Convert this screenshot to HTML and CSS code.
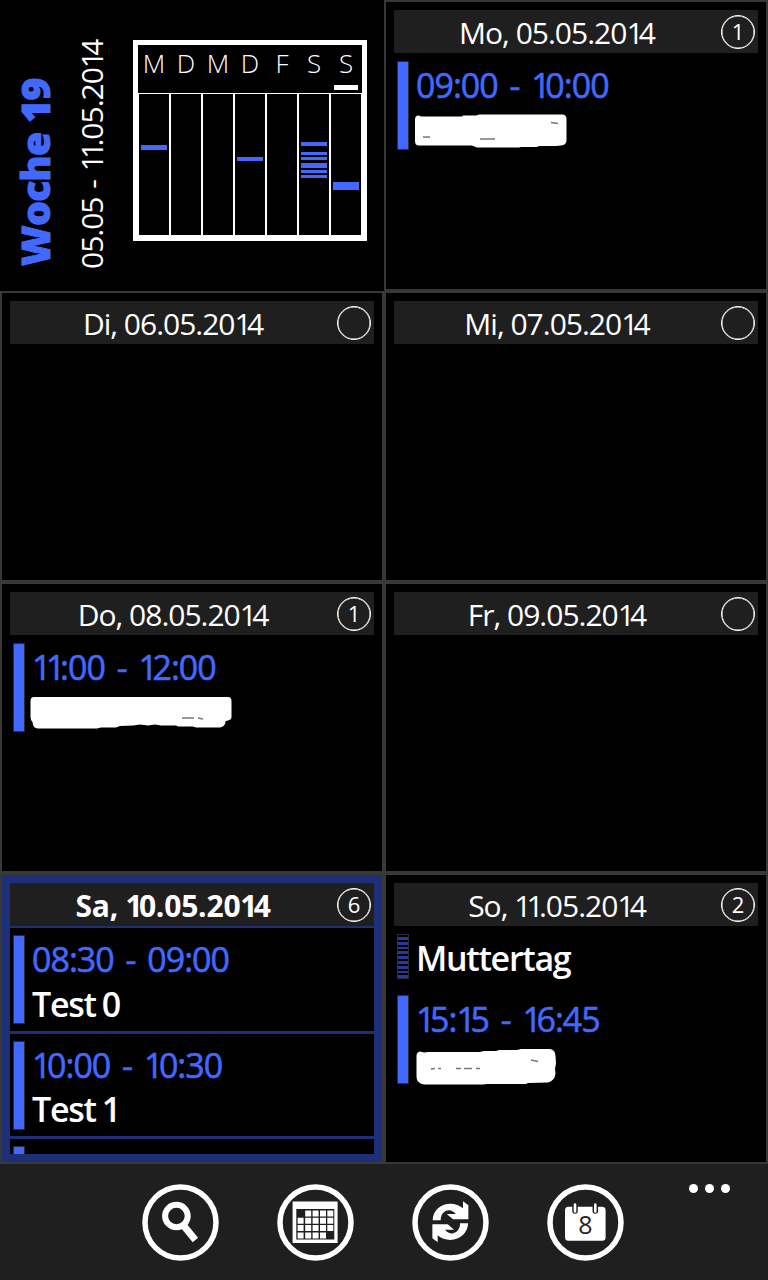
FILE: index.html
```
<!doctype html>
<html lang="de">
    <head>
        <meta charset="utf-8">
        <title>Woche 19</title>
        <meta name="viewport" content="width=device-width, initial-scale=1"/>
        <link rel="stylesheet" href="styles.css">
    </head>
    <body>
        <div class="week" role="main">
            <div class="overview">
                <h1 class="overview-title">Woche 19</h1>
                <p class="overview-range">05.05 - <span class="one">11</span>.05.20<span class="one">1</span>4</p>
                <div class="mini">
                    <div class="mini-head">
                        <span>M</span><span>D</span><span>M</span><span>D</span><span>F</span><span>S</span><span class="today">S</span>
                    </div>
                    <div class="mini-body">
                        <div class="mini-day"><i style="margin-top:51px;height:5px"></i></div>
                        <div class="mini-day"></div>
                        <div class="mini-day"></div>
                        <div class="mini-day"><i style="margin-top:63px;height:4px"></i></div>
                        <div class="mini-day"></div>
                        <div class="mini-day">
                            <i style="margin-top:48px;height:4px"></i>
                            <i style="margin-top:6px;height:3px"></i>
                            <i style="margin-top:2px;height:3px"></i>
                            <i style="margin-top:3px;height:5px"></i>
                            <i style="margin-top:1.5px;height:3.5px"></i>
                            <i style="margin-top:1.5px;height:3.5px"></i>
                        </div>
                        <div class="mini-day"><i style="margin-top:88px;height:8px"></i></div>
                    </div>
                </div>
            </div>

            <div class="day">
                <div class="day-head"><h2 class="date">Mo, 05.05.20<span class="one">1</span>4</h2><span class="count">1</span></div>
                <div class="events">
                    <div class="event">
                        <div class="bar"></div>
                        <div class="event-text">
                            <p class="time">09:00 - <span class="one">1</span>0:00</p>
                            <svg class="scribble" width="210" height="44" viewBox="0 0 210 44">
                                <path fill="#fff" d="M1 14Q1 9 5 9.500L7 10.500L48 10.500L49 9.500L62 9.500L65 8.500H148Q152.500 8.500 152.500 13V34Q152.500 39 147 39.500L142 40L125 40L123 41H107L105 41.500H63L58 39.500H5Q1 39.500 1 35Z"/>
                                <path stroke="#777" stroke-width="1.500" d="M9 31h7M66 33h15M137 16.500l7 1"/>
                            </svg>
                        </div>
                    </div>
                </div>
            </div>

            <div class="day">
                <div class="day-head"><h2 class="date">Di, 06.05.20<span class="one">1</span>4</h2><span class="count"></span></div>
            </div>

            <div class="day">
                <div class="day-head"><h2 class="date">Mi, 07.05.20<span class="one">1</span>4</h2><span class="count"></span></div>
            </div>

            <div class="day">
                <div class="day-head"><h2 class="date">Do, 08.05.20<span class="one">1</span>4</h2><span class="count">1</span></div>
                <div class="events">
                    <div class="event">
                        <div class="bar"></div>
                        <div class="event-text">
                            <p class="time"><span class="one">11</span>:00 - <span class="one">1</span>2:00</p>
                            <svg class="scribble" width="210" height="44" viewBox="0 0 210 44">
                                <path fill="#fff" d="M.500 13Q.500 9 4 9H198Q201.500 9 201.500 13V29Q201.500 32.500 195.500 33V34Q195 38.500 190 39.500H166L163 38.500H148L146 37.500H131L125 36.500L118 37.500L110 36.500L103 37.500L90 38L86 39.500H71L67 40.500H8Q3 40.500 2.500 34Q.500 32 .500 29Z"/>
                                <path stroke="#777" stroke-width="1.500" d="M152 30h12M168 30l5 1"/>
                            </svg>
                        </div>
                    </div>
                </div>
            </div>

            <div class="day">
                <div class="day-head"><h2 class="date">Fr, 09.05.20<span class="one">1</span>4</h2><span class="count"></span></div>
            </div>

            <div class="day day--selected">
                <div class="day-head"><h2 class="date">Sa, <span class="one">1</span>0.05.20<span class="one">1</span>4</h2><span class="count">6</span></div>
                <div class="events">
                    <div class="event">
                        <div class="bar"></div>
                        <div class="event-text">
                            <p class="time">08:30 - 09:00</p>
                            <p class="title">Test 0</p>
                        </div>
                    </div>
                    <div class="event">
                        <div class="bar"></div>
                        <div class="event-text">
                            <p class="time"><span class="one">1</span>0:00 - <span class="one">1</span>0:30</p>
                            <p class="title">Test 1</p>
                        </div>
                    </div>
                    <div class="event">
                        <div class="bar"></div>
                    </div>
                </div>
            </div>

            <div class="day">
                <div class="day-head"><h2 class="date">So, <span class="one">11</span>.05.20<span class="one">1</span>4</h2><span class="count">2</span></div>
                <div class="events">
                    <div class="event event--allday">
                        <div class="bar bar--striped"></div>
                        <div class="event-text">
                            <p class="title">Muttertag</p>
                        </div>
                    </div>
                    <div class="event">
                        <div class="bar"></div>
                        <div class="event-text">
                            <p class="time"><span class="one">1</span>5:<span class="one">1</span>5 - <span class="one">1</span>6:45</p>
                            <svg class="scribble" width="210" height="44" viewBox="0 0 210 44">
                                <path fill="#fff" d="M2.500 16Q2.500 12 6 11.500L10 12.500L14 12H66L70 11H82L85 10H103L107 9H136Q141.500 10 141.500 16L142 23L141 29L141.500 33Q141 41 134 42.500L114 43L112 44H73L69 44.500H10Q2.500 43 2.500 37Z"/>
                                <path stroke="#777" stroke-width="1.500" d="M17 29l4-.500M24 28.500h3M42 28.500h5M50 28.500h8M62 28.500h4M117 20l7 1.500"/>
                            </svg>
                        </div>
                    </div>
                </div>
            </div>
        </div>

        <div class="appbar">
            <svg class="icon" viewBox="0 0 77 77">
                <circle class="ring" cx="38.500" cy="38.500" r="35.500"/>
                <circle cx="34.400" cy="32" r="11.300" fill="none" stroke="#fff" stroke-width="6"/>
                <path d="M41.500 41.500L53.400 56" stroke="#fff" stroke-width="7"/>
            </svg>
            <svg class="icon" viewBox="0 0 77 77">
                <circle class="ring" cx="38.500" cy="38.500" r="35.500"/>
                <path fill="#fff" d="M15.600 17.400h45v41.600h-45z"/>
                <path fill="#1f1f1f" d="M19.300 25h38v30.400h-38z"/>
                <path stroke="#fff" stroke-width="6" d="M28.200 29.400h6m1.400 0h6m1.400 0h6m1.300 0h6M20.600 36.700h6m1.600 0h6m1.400 0h6m1.400 0h6m1.300 0h6M20.600 44h6m1.600 0h6m1.400 0h6m1.400 0h6m1.300 0h6M20.600 51.400h6m1.600 0h6m1.400 0h6m1.400 0h6"/>
            </svg>
            <svg class="icon" viewBox="0 0 77 77">
                <circle class="ring" cx="38.500" cy="38.500" r="35.500"/>
                <g transform="translate(-12.300 -14.300) scale(.3333)" fill="#fff">
                    <path id="arrow" d="M99 152C99 124 122 102 152 102C167 102 180 107 190 116V95L206 107V149H160L141 133H168C150 110 122 125 123 152Z"/>
                    <use href="#arrow" transform="rotate(180 152 156.500)"/>
                </g>
            </svg>
            <svg class="icon" viewBox="0 0 77 77">
                <circle class="ring" cx="38.500" cy="38.500" r="35.500"/>
                <rect x="18" y="22.700" width="40.600" height="34" rx="3.500" fill="#fff"/>
                <path d="M28 21.500v5.500M48.300 21.500v5.500" stroke="#1f1f1f" stroke-width="5.500" stroke-linecap="round"/>
                <path d="M28 20.500v7M48.300 20.500v7" stroke="#fff" stroke-width="2.600" stroke-linecap="round"/>
                <text class="icon-number" x="38.300" y="50">8</text>
            </svg>
            <div class="more"><i></i><i></i><i></i></div>
        </div>
    </body>
</html>
```
FILE: styles.css
```
* {
    box-sizing: border-box;
}
body {
    margin: 0;
    background-color: #000;
    color: #fff;
    font-family: "Open Sans", "Noto Sans", sans-serif;
}
h1, h2, p {
    margin: 0;
    white-space: nowrap;
}
.week {
    display: grid;
    grid-template-columns: 384px 384px;
    grid-auto-rows: 291px;
}
/* narrow figure one */
.one {
    letter-spacing: -.16em;
}

/* week overview */
.overview {
    display: flex;
    padding: 40px 0 0 12px;
}
.overview-title,
.overview-range {
    writing-mode: vertical-rl;
    transform: rotate(180deg);
    text-align: left;
}
.overview-title {
    width: 46px;
    height: 226px;
    line-height: 46px;
    color: #4169ff;
    font-size: 39px;
    font-weight: 800;
    letter-spacing: -.6px;
    -webkit-text-stroke: 1px #4169ff;
}
.overview-range {
    width: 40px;
    height: 229px;
    margin-left: 14px;
    line-height: 40px;
    font-size: 30px;
    letter-spacing: -1px;
    word-spacing: 2px;
}
.mini {
    width: 234px;
    height: 201px;
    margin-left: 21px;
    border: 5px solid #fff;
}
.mini-head {
    display: flex;
    height: 48px;
}
.mini-head span {
    width: 32px;
    height: 45px;
    line-height: 36px;
    text-align: center;
    font-size: 26px;
    font-weight: 300;
}
.mini-head .today {
    background: linear-gradient(#fff, #fff) 4px 40px / 24px 5px no-repeat;
}
.mini-body {
    display: flex;
}
.mini-day {
    display: flex;
    flex-direction: column;
    width: 32px;
    height: 143px;
    padding-left: 2px;
    border: 1px solid #fff;
}
.mini-day i {
    width: 26px;
    flex: none;
    background-color: #4169ff;
}

/* day cells */
.day {
    display: flex;
    flex-direction: column;
    padding: 8px;
    border: 2px solid #383838;
    overflow: hidden;
}
.day-head {
    display: flex;
    align-items: center;
    height: 43px;
    flex: none;
    background-color: #1f1f1f;
}
.date {
    flex: 1;
    padding-top: 2px;
    padding-right: 1px;
    line-height: 43px;
    text-align: center;
    font-size: 30px;
    font-weight: 400;
    letter-spacing: -1px;
}
.count {
    width: 34px;
    height: 34px;
    margin-right: 3px;
    border: 1px solid #fff;
    border-radius: 50%;
    box-shadow: inset 0 0 0 .5px #fff;
    line-height: 31px;
    text-align: center;
    font-size: 22px;
}
.events {
    display: flex;
    flex-direction: column;
    flex: 1;
    gap: 3px;
    margin-top: 1px;
    overflow: hidden;
}
.event {
    display: flex;
    flex: none;
    height: 102.5px;
    padding: 7px 0 0 3px;
}
.event--allday {
    height: 58px;
}
.bar {
    width: 12px;
    height: 89px;
    background-color: #4169ff;
    border: 1px solid #2c2c34;
}
.bar--striped {
    height: 45px;
    background: repeating-linear-gradient(#000 0, #000 2px, #243a96 2px, #243a96 4.8px);
}
.event-text {
    margin-left: 5px;
}
.time,
.title {
    height: 44.5px;
    padding: 2px 0 0 2px;
    line-height: 44.5px;
    font-size: 34px;
}
.time {
    color: #4169ff;
    letter-spacing: -1px;
    word-spacing: 4px;
    -webkit-text-stroke: .6px #4169ff;
}
.title {
    font-weight: 600;
    letter-spacing: -1.3px;
    word-spacing: -1.5px;
}
.scribble {
    display: block;
    overflow: visible;
}
.day--selected {
    background-color: #1e2f78;
}
.day--selected .events {
    margin-top: 2px;
}
.day--selected .event {
    background-color: #000;
}
.day--selected .date {
    font-weight: 700;
    letter-spacing: -.2px;
}
.day--selected .one {
    letter-spacing: -.13em;
}

/* bottom bar */
.appbar {
    display: flex;
    align-items: flex-start;
    gap: 58px;
    height: 116px;
    padding: 20px 38px 0 142px;
    background-color: #1f1f1f;
}
.icon {
    width: 77px;
    height: 77px;
}
.ring {
    fill: none;
    stroke: #fff;
    stroke-width: 5.5;
}
.icon-number {
    fill: #1f1f1f;
    font-size: 25px;
    text-anchor: middle;
}
.more {
    display: flex;
    gap: 7px;
    margin-left: auto;
}
.more i {
    width: 9px;
    height: 9px;
    border-radius: 50%;
    background-color: #fff;
}
```
